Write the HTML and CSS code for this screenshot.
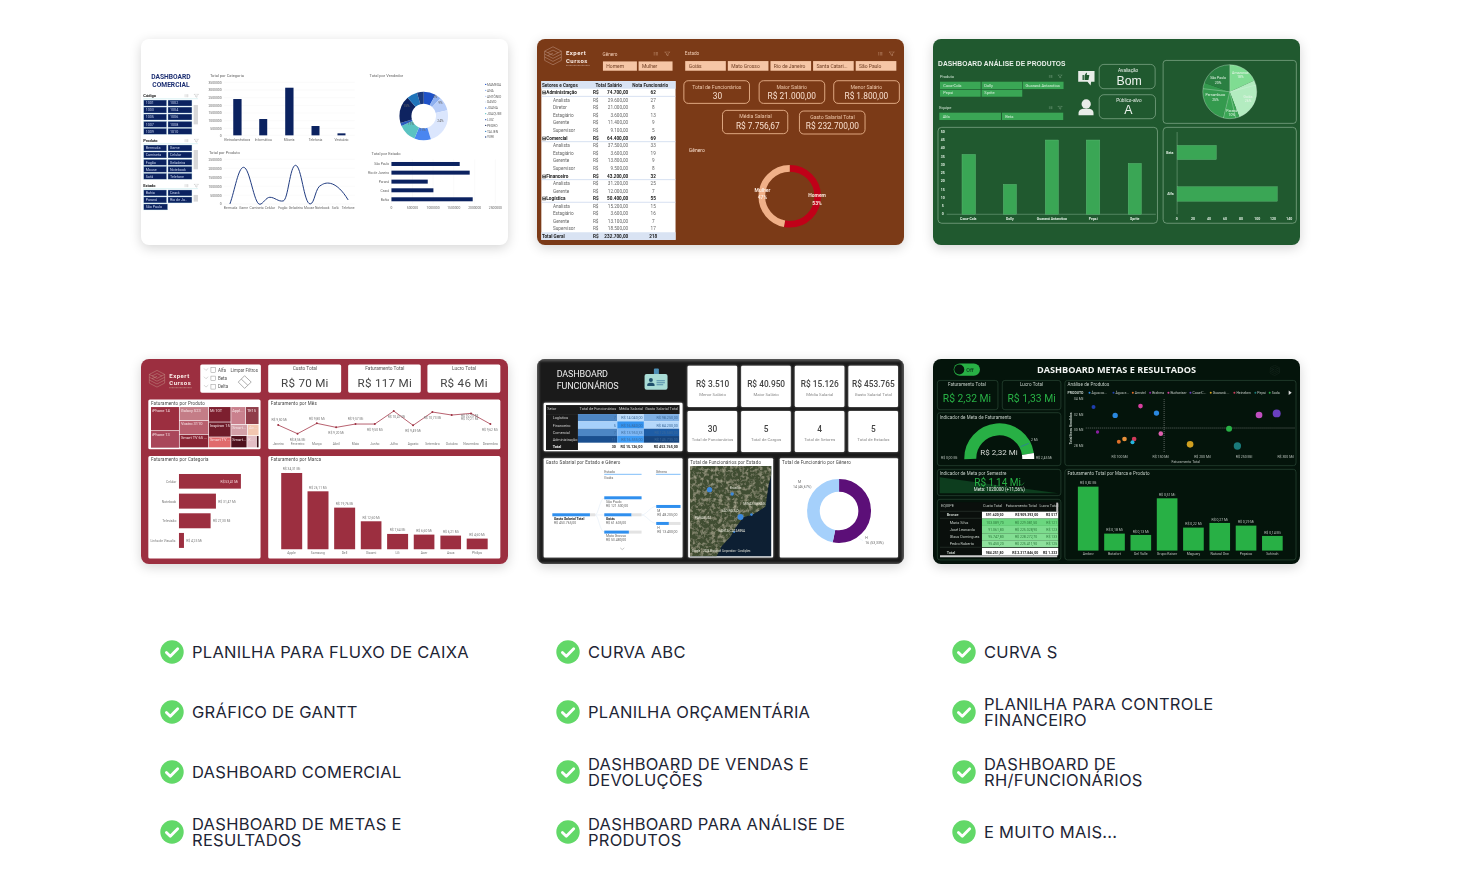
FILE: index.html
```html
<!DOCTYPE html>
<html lang="pt-BR">
<head>
<meta charset="utf-8">
<title>Dashboards</title>
<link rel="stylesheet" href="styles.css">
</head>
<body>
<svg class="defs" width="0" height="0" aria-hidden="true">
  <symbol id="check" viewBox="0 0 24 24">
    <circle cx="12" cy="12" r="11.7" fill="#62d868"/>
    <path d="M6.4 12.4l3.9 3.9 7.4-7.6" fill="none" stroke="#fff" stroke-width="2.8" stroke-linecap="round" stroke-linejoin="round"/>
  </symbol>
  <symbol id="slicer-icons" viewBox="0 0 48 12">
    <path d="M2 3h3M2 6h3M2 9h3M7 3h6M7 6h6M7 9h6M30 1h14l-5 5v5l-4-2V6z" fill="none" stroke="currentColor" stroke-width="1"/>
  </symbol>
  <symbol id="hexlogo" viewBox="0 0 56 58">
    <path d="M28 2L53 15V43L28 56 3 43V15zM3 15L28 28 53 15M3 24L28 37 53 24M3 33L28 46 53 33M12 20L28 12 44 20M12 29L28 21" fill="none" stroke="currentColor" stroke-width="1.4"/>
  </symbol>
</svg>

<main class="page">
  <section class="gallery">

    <!-- Dashboard comercial -->
    <figure class="card card-white">
      <svg class="dash d1" viewBox="33 27 1102 618" role="img" aria-label="Dashboard comercial">
        <text x="123" y="146" class="c1title mid">DASHBOARD</text>
        <text x="123" y="172" class="c1title mid">COMERCIAL</text>

        <g class="slic">
          <text x="40" y="201" class="hd">Código</text><path d="M40 206H204" class="ul"/>
          <use href="#slicer-icons" x="162" y="191" width="48" height="12" class="ic"/>
          <rect x="41" y="210" width="69" height="18"/><rect x="114" y="210" width="72" height="18"/>
          <rect x="41" y="231" width="69" height="18"/><rect x="114" y="231" width="72" height="18"/>
          <rect x="41" y="252" width="69" height="18"/><rect x="114" y="252" width="72" height="18"/>
          <rect x="41" y="274" width="69" height="18"/><rect x="114" y="274" width="72" height="18"/>
          <rect x="41" y="295" width="69" height="18"/><rect x="114" y="295" width="72" height="18"/>
          <rect x="191" y="225" width="13" height="58" class="sb"/>
          <text x="47" y="223">1001</text><text x="120" y="223">1002</text>
          <text x="47" y="244">1003</text><text x="120" y="244">1004</text>
          <text x="47" y="265">1005</text><text x="120" y="265">1006</text>
          <text x="47" y="287">1007</text><text x="120" y="287">1008</text>
          <text x="47" y="308">1009</text><text x="120" y="308">1010</text>

          <text x="40" y="335" class="hd">Produto</text><path d="M40 341H204" class="ul"/>
          <use href="#slicer-icons" x="162" y="326" width="48" height="12" class="ic"/>
          <rect x="41" y="345" width="69" height="18"/><rect x="114" y="345" width="72" height="18"/>
          <rect x="41" y="366" width="69" height="18"/><rect x="114" y="366" width="72" height="18"/>
          <rect x="41" y="388" width="69" height="18"/><rect x="114" y="388" width="72" height="18"/>
          <rect x="41" y="409" width="69" height="18"/><rect x="114" y="409" width="72" height="18"/>
          <rect x="41" y="430" width="69" height="18"/><rect x="114" y="430" width="72" height="18"/>
          <rect x="191" y="360" width="13" height="58" class="sb"/>
          <text x="47" y="358">Bermuda</text><text x="120" y="358">Game</text>
          <text x="47" y="379">Camiseta</text><text x="120" y="379">Celular</text>
          <text x="47" y="401">Fogão</text><text x="120" y="401">Geladeira</text>
          <text x="47" y="422">Mouse</text><text x="120" y="422">Notebook</text>
          <text x="47" y="443">Sofá</text><text x="120" y="443">Telefone</text>

          <text x="40" y="470" class="hd">Estado</text><path d="M40 476H204" class="ul"/>
          <use href="#slicer-icons" x="162" y="461" width="48" height="12" class="ic"/>
          <rect x="41" y="480" width="69" height="18"/><rect x="114" y="480" width="72" height="18"/>
          <rect x="41" y="501" width="69" height="18"/><rect x="114" y="501" width="72" height="18"/>
          <rect x="41" y="522" width="72" height="18"/>
          <rect x="191" y="495" width="13" height="20" class="sb"/>
          <text x="47" y="493">Bahia</text><text x="120" y="493">Ceará</text>
          <text x="47" y="514">Paraná</text><text x="120" y="514">Rio de Ja..</text>
          <text x="47" y="535">São Paulo</text>
        </g>

        <text x="240" y="141" class="ttl">Total por Categoria</text>
        <path d="M282 157H675M282 180H675M282 203H675M282 226H675M282 249H675M282 272H675M282 295H675M282 316H675" class="grid"/>
        <g class="ax end">
          <text x="275" y="161">3500000</text><text x="275" y="184">3000000</text><text x="275" y="207">2500000</text><text x="275" y="230">2000000</text>
          <text x="275" y="253">1500000</text><text x="275" y="276">1000000</text><text x="275" y="299">500000</text><text x="275" y="320">0</text>
        </g>
        <g class="navy">
          <rect x="310" y="207" width="25" height="109"/><rect x="388" y="267" width="24" height="49"/>
          <rect x="466" y="173" width="25" height="143"/><rect x="545" y="288" width="24" height="28"/>
          <rect x="623" y="310" width="24" height="6"/>
        </g>
        <g class="ax mid">
          <text x="322" y="332">Eletrodomésticos</text><text x="400" y="332">Informática</text><text x="478" y="332">Móveis</text>
          <text x="557" y="332">Telefonia</text><text x="635" y="332">Vestuário</text>
        </g>

        <text x="719" y="141" class="ttl">Total por Vendedor</text>
        <g class="donut" transform="rotate(-90 882 258)">
          <circle cx="882" cy="258" r="55" pathLength="100" stroke="#1f52c8" stroke-dasharray="8 100"/>
          <circle cx="882" cy="258" r="55" pathLength="100" stroke="#8fb0ef" stroke-dasharray="4 100" stroke-dashoffset="-8"/>
          <circle cx="882" cy="258" r="55" pathLength="100" stroke="#b8cdf8" stroke-dasharray="9 100" stroke-dashoffset="-12"/>
          <circle cx="882" cy="258" r="55" pathLength="100" stroke="#dbe6fd" stroke-dasharray="24 100" stroke-dashoffset="-21"/>
          <circle cx="882" cy="258" r="55" pathLength="100" stroke="#4a86f0" stroke-dasharray="11 100" stroke-dashoffset="-45"/>
          <circle cx="882" cy="258" r="55" pathLength="100" stroke="#5bc3c2" stroke-dasharray="12 100" stroke-dashoffset="-56"/>
          <circle cx="882" cy="258" r="55" pathLength="100" stroke="#2b5bbd" stroke-dasharray="2 100" stroke-dashoffset="-68"/>
          <circle cx="882" cy="258" r="55" pathLength="100" stroke="#0e2360" stroke-dasharray="18 100" stroke-dashoffset="-70"/>
          <circle cx="882" cy="258" r="55" pathLength="100" stroke="#1f74ba" stroke-dasharray="7 100" stroke-dashoffset="-88"/>
          <circle cx="882" cy="258" r="55" pathLength="100" stroke="#1a3a80" stroke-dasharray="5 100" stroke-dashoffset="-95"/>
        </g>
        <g class="ax mid">
          <text x="916" y="203">3%</text><text x="932" y="221">9%</text><text x="932" y="276">24%</text><text x="878" y="302">11%</text>
          <text x="843" y="286">11%</text><text x="830" y="230">15%</text>
        </g>
        <g class="legend">
          <text x="1072" y="167">MAMEDA</text><text x="1072" y="185">ANA</text><text x="1072" y="203">ANTÔNIO</text><text x="1072" y="220">DAVID</text><text x="1072" y="238">JOANA</text>
          <text x="1072" y="255">JOAQUIM</text><text x="1072" y="273">LUIZ</text><text x="1072" y="290">PEDRO</text><text x="1072" y="308">TALIEN</text><text x="1072" y="325">YURI</text>
          <circle cx="1068" cy="163" r="2" fill="#1f52c8"/><circle cx="1068" cy="181" r="2" fill="#8fb0ef"/><circle cx="1068" cy="199" r="2" fill="#b8cdf8"/><circle cx="1068" cy="216" r="2" fill="#dbe6fd"/><circle cx="1068" cy="234" r="2" fill="#4a86f0"/>
          <circle cx="1068" cy="251" r="2" fill="#5bc3c2"/><circle cx="1068" cy="269" r="2" fill="#2b5bbd"/><circle cx="1068" cy="286" r="2" fill="#0e2360"/><circle cx="1068" cy="304" r="2" fill="#1f74ba"/><circle cx="1068" cy="321" r="2" fill="#1a3a80"/>
        </g>

        <text x="237" y="372" class="ttl">Total por Produto</text>
        <path d="M282 388H675M282 415H675M282 442H675M282 469H675M282 496H675M282 522H675" class="grid"/>
        <g class="ax end">
          <text x="275" y="392">2500000</text><text x="275" y="419">2000000</text><text x="275" y="446">1500000</text><text x="275" y="473">1000000</text><text x="275" y="500">500000</text><text x="275" y="526">0</text>
        </g>
        <path d="M300 522C315 480 325 412 341 412C360 412 372 524 390 523C400 522 408 502 420 502C435 502 445 516 460 513C475 510 480 406 497 406C515 406 522 522 541 522C555 522 556 470 575 465C590 455 620 452 655 510" class="curve"/>
        <g class="ax mid">
          <text x="302" y="537">Bermuda</text><text x="341" y="537">Game</text><text x="380" y="537">Camiseta</text><text x="420" y="537">Celular</text><text x="459" y="537">Fogão</text>
          <text x="498" y="537">Geladeira</text><text x="538" y="537">Mouse</text><text x="577" y="537">Notebook</text><text x="616" y="537">Sofá</text><text x="655" y="537">Telefone</text>
        </g>

        <text x="725" y="376" class="ttl">Total por Estado</text>
        <path d="M785 388V522M848 388V522M910 388V522M972 388V522M1035 388V522M1097 388V522" class="grid"/>
        <g class="navy">
          <rect x="785" y="396" width="205" height="12"/><rect x="785" y="422" width="235" height="12"/><rect x="785" y="449" width="109" height="12"/>
          <rect x="785" y="475" width="126" height="12"/><rect x="785" y="502" width="244" height="12"/>
        </g>
        <g class="ax end">
          <text x="778" y="406">São Paulo</text><text x="778" y="432">Rio de Janeiro</text><text x="778" y="459">Paraná</text><text x="778" y="485">Ceará</text><text x="778" y="512">Bahia</text>
        </g>
        <g class="ax mid">
          <text x="785" y="537">0</text><text x="848" y="537">500000</text><text x="910" y="537">1000000</text><text x="972" y="537">1500000</text><text x="1035" y="537">2000000</text><text x="1097" y="537">2500000</text>
        </g>
      </svg>
    </figure>

    <!-- Análise de funcionários, marrom -->
    <figure class="card card-brown">
      <svg class="dash d2" viewBox="21 27 1102 618" role="img" aria-label="Dashboard de funcionários">
        <use href="#hexlogo" x="41" y="48" width="56" height="58" class="logo"/>
        <text x="108" y="76" class="brand">Expert</text>
        <text x="108" y="98" class="brand">Cursos</text>
        <path d="M108 106H180" class="brandline"/>

        <text x="218" y="77" class="lbl">Gênero</text>
        <use href="#slicer-icons" x="368" y="64" width="58" height="14" class="ic"/>
        <text x="465" y="76" class="lbl">Estado</text>
        <use href="#slicer-icons" x="1042" y="64" width="58" height="14" class="ic"/>
        <g class="peach">
          <rect x="219" y="94" width="102" height="28"/><rect x="326" y="94" width="102" height="28"/>
          <rect x="466" y="93" width="122" height="29"/><rect x="594" y="93" width="122" height="29"/><rect x="722" y="93" width="122" height="29"/><rect x="850" y="93" width="122" height="29"/><rect x="978" y="93" width="122" height="29"/>
          <text x="229" y="113">Homem</text><text x="336" y="113">Mulher</text>
          <text x="477" y="113">Goiás</text><text x="604" y="113">Mato Grosso</text><text x="732" y="113">Rio de Janeiro</text><text x="860" y="113">Santa Catari...</text><text x="988" y="113">São Paulo</text>
        </g>

        <g class="tbl">
          <rect x="34" y="153" width="403" height="477" class="tbg"/>
          <rect x="34" y="153" width="403" height="23" class="thd"/>
          <rect x="34" y="607" width="403" height="23" class="thd"/>
          <path d="M34 199H437M34 335H437M34 449H437M34 517H437" class="tln"/>
          <g class="b">
            <text x="36" y="170">Setores e Cargos</text><text x="197" y="170">Total Salário</text><text x="307" y="170">Nota Funcionário</text>
            <text x="37" y="193">⊟Administração</text><text x="189" y="193">R$</text><text x="295" y="193" class="end">74.700,00</text><text x="370" y="193" class="mid">62</text>
            <text x="37" y="329">⊟Comercial</text><text x="189" y="329">R$</text><text x="295" y="329" class="end">64.400,00</text><text x="370" y="329" class="mid">69</text>
            <text x="37" y="443">⊟Financeiro</text><text x="189" y="443">R$</text><text x="295" y="443" class="end">43.200,00</text><text x="370" y="443" class="mid">32</text>
            <text x="37" y="511">⊟Logística</text><text x="189" y="511">R$</text><text x="295" y="511" class="end">50.400,00</text><text x="370" y="511" class="mid">55</text>
            <text x="36" y="624">Total Geral</text><text x="189" y="624">R$</text><text x="295" y="624" class="end">232.700,00</text><text x="370" y="624" class="mid">218</text>
          </g>
          <text x="69" y="215">Analista</text><text x="189" y="215">R$</text><text x="295" y="215" class="end">29.600,00</text><text x="370" y="215" class="mid">27</text>
          <text x="69" y="238">Diretor</text><text x="189" y="238">R$</text><text x="295" y="238" class="end">21.000,00</text><text x="370" y="238" class="mid">8</text>
          <text x="69" y="261">Estagiário</text><text x="189" y="261">R$</text><text x="295" y="261" class="end">3.600,00</text><text x="370" y="261" class="mid">13</text>
          <text x="69" y="283">Gerente</text><text x="189" y="283">R$</text><text x="295" y="283" class="end">11.400,00</text><text x="370" y="283" class="mid">9</text>
          <text x="69" y="306">Supervisor</text><text x="189" y="306">R$</text><text x="295" y="306" class="end">9.100,00</text><text x="370" y="306" class="mid">5</text>
          <text x="69" y="351">Analista</text><text x="189" y="351">R$</text><text x="295" y="351" class="end">37.500,00</text><text x="370" y="351" class="mid">33</text>
          <text x="69" y="374">Estagiário</text><text x="189" y="374">R$</text><text x="295" y="374" class="end">3.600,00</text><text x="370" y="374" class="mid">19</text>
          <text x="69" y="397">Gerente</text><text x="189" y="397">R$</text><text x="295" y="397" class="end">13.800,00</text><text x="370" y="397" class="mid">9</text>
          <text x="69" y="419">Supervisor</text><text x="189" y="419">R$</text><text x="295" y="419" class="end">9.500,00</text><text x="370" y="419" class="mid">8</text>
          <text x="69" y="465">Analista</text><text x="189" y="465">R$</text><text x="295" y="465" class="end">31.200,00</text><text x="370" y="465" class="mid">25</text>
          <text x="69" y="488">Gerente</text><text x="189" y="488">R$</text><text x="295" y="488" class="end">12.000,00</text><text x="370" y="488" class="mid">7</text>
          <text x="69" y="533">Analista</text><text x="189" y="533">R$</text><text x="295" y="533" class="end">15.200,00</text><text x="370" y="533" class="mid">15</text>
          <text x="69" y="556">Estagiário</text><text x="189" y="556">R$</text><text x="295" y="556" class="end">3.600,00</text><text x="370" y="556" class="mid">16</text>
          <text x="69" y="578">Gerente</text><text x="189" y="578">R$</text><text x="295" y="578" class="end">13.100,00</text><text x="370" y="578" class="mid">7</text>
          <text x="69" y="601">Supervisor</text><text x="189" y="601">R$</text><text x="295" y="601" class="end">18.500,00</text><text x="370" y="601" class="mid">17</text>
        </g>

        <g class="kpi">
          <rect x="462" y="152" width="197" height="68" rx="13"/><rect x="688" y="152" width="197" height="68" rx="13"/><rect x="912" y="152" width="197" height="68" rx="13"/>
          <rect x="578" y="241" width="196" height="70" rx="13"/><rect x="809" y="243" width="197" height="69" rx="13"/>
          <g class="mid">
            <text x="561" y="176">Total de Funcionários</text><text x="786" y="176">Maior Salário</text><text x="1010" y="176">Menor Salário</text>
            <text x="677" y="265">Média Salarial</text><text x="908" y="267">Gasto Salarial Total</text>
            <text x="563" y="207" class="v">30</text><text x="786" y="207" class="v">R$ 21.000,00</text><text x="1010" y="207" class="v">R$ 1.800,00</text>
            <text x="684" y="297" class="v">R$ 7.756,67</text><text x="908" y="298" class="v">R$ 232.700,00</text>
          </g>
        </g>

        <text x="477" y="365" class="lbl2">Gênero</text>
        <g class="donut thin" transform="rotate(-90 780 499)">
          <circle cx="780" cy="499" r="84" pathLength="100" stroke="#c00018" stroke-dasharray="53 100"/>
          <circle cx="780" cy="499" r="84" pathLength="100" stroke="#f0b088" stroke-dasharray="47 100" stroke-dashoffset="-53"/>
        </g>
        <g class="plab mid">
          <text x="698" y="485">Mulher</text><text x="698" y="508">47%</text>
          <text x="862" y="502">Homem</text><text x="862" y="525">53%</text>
        </g>
      </svg>
    </figure>

    <!-- Análise de produtos, verde -->
    <figure class="card card-green">
      <svg class="dash d3" viewBox="24 27 1102 618" role="img" aria-label="Dashboard análise de produtos">
        <text x="39" y="107" class="gt">DASHBOARD ANÁLISE DE PRODUTOS</text>
        <text x="45" y="144" class="gl">Produto</text>
        <use href="#slicer-icons" x="370" y="133" width="46" height="12" class="ic"/>
        <g class="gb">
          <rect x="45" y="155" width="122" height="22"/><rect x="170" y="155" width="122" height="22"/><rect x="294" y="155" width="122" height="22"/>
          <rect x="45" y="179" width="122" height="21"/><rect x="170" y="179" width="122" height="21"/>
          <text x="55" y="170">Coca-Cola</text><text x="178" y="170">Dolly</text><text x="302" y="170">Guaraná Antarctica</text>
          <text x="55" y="193">Pepsi</text><text x="178" y="193">Sprite</text>
        </g>
        <text x="43" y="237" class="gl">Equipe</text>
        <use href="#slicer-icons" x="370" y="227" width="46" height="12" class="ic"/>
        <g class="gb">
          <rect x="43" y="248" width="185" height="22"/><rect x="231" y="248" width="184" height="22"/>
          <text x="53" y="263">Alfa</text><text x="241" y="263">Beta</text>
        </g>

        <path d="M460 123H509V155H499L497 166 488 155H460z" class="wh"/>
        <path d="M473 135h4v15h-4zM479 136l5-8c2 0 3 2 2 5l-1 2h7c1 0 2 1 1 3l-2 10c0 2-1 2-3 2h-9z" class="thumb"/>
        <circle cx="484" cy="222" r="14" class="wh"/>
        <path d="M461 256V248C461 241 468 237 474 236H494C500 237 506 241 506 248V256z" class="wh"/>

        <g class="gbox">
          <rect x="523" y="103" width="168" height="73" rx="14"/><rect x="523" y="194" width="169" height="72" rx="14"/>
          <rect x="715" y="91" width="400" height="189" rx="9"/><rect x="39" y="292" width="659" height="288" rx="11"/><rect x="715" y="292" width="400" height="288" rx="11"/>
        </g>
        <g class="gv mid">
          <text x="610" y="125" class="s13">Avaliação</text><text x="613" y="165" class="s36">Bom</text>
          <text x="612" y="215" class="s13">Público-alvo</text><text x="611" y="253" class="s36">A</text>
        </g>

        <g class="donut pie" transform="rotate(-90 915 185)">
          <circle cx="915" cy="185" r="40.5" pathLength="100" stroke="#7fdc92" stroke-dasharray="18 100"/>
          <circle cx="915" cy="185" r="40.5" pathLength="100" stroke="#b3ecc0" stroke-dasharray="26 100" stroke-dashoffset="-18"/>
          <circle cx="915" cy="185" r="40.5" pathLength="100" stroke="#3ba655" stroke-dasharray="10 100" stroke-dashoffset="-44"/>
          <circle cx="915" cy="185" r="40.5" pathLength="100" stroke="#349a4e" stroke-dasharray="26 100" stroke-dashoffset="-54"/>
          <circle cx="915" cy="185" r="40.5" pathLength="100" stroke="#2a7f42" stroke-dasharray="20 100" stroke-dashoffset="-80"/>
        </g>
        <path d="M915 185V104M915 185L995 165M915 185L933 264M915 185L896 264M915 185L835 176" class="pieln"/>
        <circle cx="915" cy="185" r="81" class="piering"/>
        <g class="pl mid">
          <text x="947" y="131">Amazonas</text><text x="947" y="144">18%</text>
          <text x="970" y="204">Goiás</text><text x="970" y="216">26%</text>
          <text x="921" y="246">Paraná</text><text x="921" y="258">10%</text>
          <text x="872" y="199">Pernambuco</text><text x="872" y="212">25%</text>
          <text x="880" y="148">São Paulo</text><text x="880" y="161">20%</text>
        </g>

        <path d="M65 553H693M757 306V553" class="gax"/>
        <g class="gc">
          <rect x="111" y="373" width="41" height="180"/><rect x="235" y="463" width="40" height="90"/><rect x="361" y="330" width="40" height="223"/>
          <rect x="484" y="330" width="41" height="223"/><rect x="610" y="400" width="40" height="153"/>
          <rect x="757" y="346" width="118" height="43"/><rect x="757" y="470" width="301" height="44"/>
        </g>
        <g class="ga mid">
          <text x="53" y="308">50</text><text x="53" y="333">45</text><text x="53" y="358">40</text><text x="53" y="383">35</text><text x="53" y="408">30</text><text x="53" y="432">25</text>
          <text x="53" y="457">20</text><text x="53" y="482">15</text><text x="53" y="507">10</text><text x="53" y="532">5</text><text x="53" y="556">0</text>
          <text x="130" y="570">Coca-Cola</text><text x="255" y="570">Dolly</text><text x="381" y="570">Guaraná Antarctica</text><text x="505" y="570">Pepsi</text><text x="630" y="570">Sprite</text>
          <text x="735" y="372">Beta</text><text x="737" y="495">Alfa</text>
          <text x="756" y="570">0</text><text x="805" y="570">20</text><text x="853" y="570">40</text><text x="901" y="570">60</text><text x="949" y="570">80</text><text x="998" y="570">100</text><text x="1045" y="570">120</text><text x="1094" y="570">140</text>
        </g>
      </svg>
    </figure>

    <!-- Vendas, vermelho -->
    <figure class="card card-red">
      <svg class="dash d4" viewBox="33 27 1102 618" role="img" aria-label="Dashboard de vendas">
        <use href="#hexlogo" x="55" y="58" width="52" height="56" class="logo"/>
        <text x="118" y="84" class="brand">Expert</text>
        <text x="118" y="105" class="brand">Cursos</text>
        <path d="M118 113H186" class="brandline"/>

        <g class="rp">
          <rect x="211" y="43" width="182" height="85" rx="5"/>
          <rect x="415" y="43" width="219" height="85" rx="5"/><rect x="655" y="43" width="218" height="85" rx="5"/><rect x="893" y="43" width="219" height="85" rx="5"/>
          <rect x="55" y="148" width="337" height="150" rx="5"/><rect x="415" y="148" width="697" height="150" rx="5"/>
          <rect x="55" y="318" width="337" height="308" rx="5"/><rect x="415" y="318" width="697" height="308" rx="5"/>
        </g>
        <path d="M222 55l6 6 7-6M222 80l6 6 7-6M222 105l6 6 7-6" class="chev"/>
        <g class="cb"><rect x="243" y="53" width="14" height="14"/><rect x="243" y="78" width="14" height="14"/><rect x="243" y="103" width="14" height="14"/></g>
        <g class="rt">
          <text x="264" y="65">Alfa</text><text x="264" y="90">Beta</text><text x="264" y="115">Delta</text>
          <text x="343" y="65" class="mid">Limpar Filtros</text>
        </g>
        <path d="M344 77L364 96 344 115 325 96zM334 87L354 106" class="erase"/>
        <g class="mid">
          <text x="525" y="59" class="rl">Custo Total</text><text x="765" y="59" class="rl">Faturamento Total</text><text x="1003" y="59" class="rl">Lucro Total</text>
          <text x="525" y="110" class="rv">R$ 70 Mi</text><text x="765" y="110" class="rv">R$ 117 Mi</text><text x="1003" y="110" class="rv">R$ 46 Mi</text>
        </g>

        <text x="63" y="164" class="rh">Faturamento por Produto</text>
        <rect x="63" y="171" width="84" height="70" fill="#9c2f40"/><rect x="63" y="243" width="84" height="50" fill="#a9475a"/>
        <rect x="149" y="171" width="86" height="39" fill="#c47d87"/><rect x="149" y="212" width="86" height="40" fill="#b85f6e"/><rect x="149" y="254" width="86" height="38" fill="#8a2535"/>
        <rect x="237" y="171" width="65" height="44" fill="#7d1f2f"/><rect x="237" y="217" width="65" height="43" fill="#6f1c2a"/><rect x="237" y="262" width="65" height="30" fill="#e06a6c"/>
        <rect x="304" y="171" width="42" height="51" fill="#c9808d"/><rect x="348" y="171" width="38" height="51" fill="#8f3c49"/>
        <rect x="304" y="224" width="48" height="32" fill="#d3a0a8"/><rect x="354" y="224" width="32" height="32" fill="#f2c6b0"/>
        <rect x="304" y="258" width="46" height="34" fill="#4f111d"/><rect x="352" y="258" width="28" height="34" fill="#e2bdc5"/><rect x="381" y="258" width="5" height="34" fill="#3b0f18"/>
        <g class="tm">
          <text x="66" y="186">iPhone 14</text><text x="66" y="258">iPhone 13</text><text x="153" y="186">Galaxy S23</text><text x="153" y="226">Vostro 3110</text><text x="153" y="268">Smart TV 65 ...</text>
          <text x="240" y="186">Mi 10T</text><text x="240" y="232">Inspiron 15</text><text x="240" y="273">Smart TV ...</text><text x="307" y="186">Appl...</text><text x="351" y="186">TE15</text>
          <text x="307" y="238">Smart...</text><text x="357" y="238">Air...</text><text x="307" y="273">Smart...</text><text x="355" y="273">K...</text>
        </g>

        <text x="423" y="164" class="rh">Faturamento por Mês</text>
        <polyline points="445,225 503,251 561,220 619,232 677,222 735,222 792,183 850,226 908,186 966,195 1024,190 1082,222" class="rline"/>
        <g class="rdot">
          <circle cx="445" cy="225" r="3"/><circle cx="503" cy="251" r="3"/><circle cx="561" cy="220" r="3"/><circle cx="619" cy="232" r="3"/><circle cx="677" cy="222" r="3"/><circle cx="735" cy="222" r="3"/>
          <circle cx="792" cy="183" r="3"/><circle cx="850" cy="226" r="3"/><circle cx="908" cy="186" r="3"/><circle cx="966" cy="195" r="3"/><circle cx="1024" cy="190" r="3"/><circle cx="1082" cy="222" r="3"/>
        </g>
        <g class="rs mid">
          <text x="448" y="214">R$ 9,50 Mi</text><text x="503" y="272">R$ 8,56 Mi</text><text x="561" y="209">R$ 9,80 Mi</text><text x="619" y="253">R$ 9,20 Mi</text><text x="677" y="211">R$ 9,57 Mi</text><text x="735" y="243">R$ 9,50 Mi</text>
          <text x="800" y="203">R$ 10,47 Mi</text><text x="850" y="247">R$ 9,49 Mi</text><text x="908" y="207">R$ 10,73 Mi</text><text x="1020" y="200">R$ 10,25 Mi</text><text x="1020" y="211">R$ 10,21 Mi</text><text x="1080" y="243">R$ 9,62 Mi</text>
          <text x="445" y="285">Janeiro</text><text x="503" y="285">Fevereiro</text><text x="561" y="285">Março</text><text x="619" y="285">Abril</text><text x="677" y="285">Maio</text><text x="735" y="285">Junho</text>
          <text x="792" y="285">Julho</text><text x="850" y="285">Agosto</text><text x="908" y="285">Setembro</text><text x="966" y="285">Outubro</text><text x="1024" y="285">Novembro</text><text x="1082" y="285">Dezembro</text>
        </g>

        <text x="63" y="334" class="rh">Faturamento por Categoria</text>
        <g class="rbar">
          <rect x="147" y="372" width="186" height="44"/><rect x="147" y="431" width="111" height="45"/><rect x="147" y="490" width="95" height="45"/><rect x="147" y="549" width="15" height="45"/>
          <rect x="454" y="369" width="63" height="229"/><rect x="533" y="424" width="63" height="174"/><rect x="613" y="473" width="63" height="125"/><rect x="693" y="514" width="62" height="84"/>
          <rect x="772" y="552" width="63" height="46"/><rect x="852" y="554" width="62" height="44"/><rect x="932" y="557" width="62" height="41"/><rect x="1011" y="566" width="63" height="32"/>
        </g>
        <g class="rs end">
          <text x="139" y="399">Celular</text><text x="139" y="458">Notebook</text><text x="139" y="517">Televisão</text><text x="139" y="576">Linha de Visualiz.</text>
        </g>
        <g class="rs">
          <text x="272" y="399" class="wtxt">R$ 53,41 Mi</text><text x="265" y="458">R$ 31,47 Mi</text><text x="249" y="517">R$ 27,30 Mi</text><text x="169" y="576">R$ 4,25 Mi</text>
        </g>
        <text x="423" y="334" class="rh">Faturamento por Marca</text>
        <g class="rs mid">
          <text x="485" y="361">R$ 34,31 Mi</text><text x="564" y="416">R$ 26,11 Mi</text><text x="644" y="465">R$ 19,76 Mi</text><text x="724" y="506">R$ 12,60 Mi</text>
          <text x="803" y="544">R$ 7,64 Mi</text><text x="883" y="546">R$ 6,60 Mi</text><text x="963" y="549">R$ 6,21 Mi</text><text x="1042" y="558">R$ 4,60 Mi</text>
          <text x="485" y="612">Apple</text><text x="564" y="612">Samsung</text><text x="644" y="612">Dell</text><text x="724" y="612">Xiaomi</text>
          <text x="803" y="612">LG</text><text x="883" y="612">Acer</text><text x="963" y="612">Asus</text><text x="1042" y="612">Philips</text>
        </g>
      </svg>
    </figure>

    <!-- Funcionários, preto -->
    <figure class="card card-black">
      <svg class="dash d5" viewBox="21 27 1102 618" role="img" aria-label="Dashboard funcionários">
        <defs>
          <filter id="sat" x="0" y="0" width="100%" height="100%">
            <feTurbulence type="fractalNoise" baseFrequency="0.09" numOctaves="3" seed="4"/>
            <feColorMatrix values="0 0 0 0 0.52  0 0 0 0 0.5  0 0 0 0 0.36  0 0 0 1.5 -0.68"/>
            <feComposite in2="SourceGraphic" operator="in"/>
            <feMerge><feMergeNode in="SourceGraphic"/><feMergeNode/></feMerge>
          </filter>
          <clipPath id="mapclip"><rect x="480" y="348" width="245" height="272"/></clipPath>
        </defs>
        <path d="M21 27H1123V645H21z" class="glow"/>
        <text x="80" y="81" class="bt">DASHBOARD</text>
        <text x="80" y="116" class="bt">FUNCIONÁRIOS</text>
        <rect x="372" y="55" width="15" height="26" rx="3" fill="#4d8fb5"/>
        <rect x="344" y="72" width="69" height="47" rx="6" fill="#a9dcd6"/>
        <circle cx="363" cy="90" r="6" fill="#1f4f6b"/><path d="M352 108V104C352 100 357 98 363 98S374 100 374 104V108z" fill="#1f4f6b"/>
        <path d="M380 92H405M380 98H405M380 104H400" class="idln"/>

        <g class="bp">
          <rect x="473" y="47" width="149" height="124" rx="4"/><rect x="634" y="47" width="149" height="124" rx="4"/><rect x="795" y="47" width="149" height="124" rx="4"/><rect x="956" y="47" width="149" height="124" rx="4"/>
          <rect x="473" y="183" width="149" height="123" rx="4"/><rect x="634" y="183" width="149" height="123" rx="4"/><rect x="795" y="183" width="149" height="123" rx="4"/><rect x="956" y="183" width="149" height="123" rx="4"/>
          <rect x="41" y="158" width="417" height="146" rx="4"/>
          <rect x="41" y="325" width="417" height="298" rx="3"/><rect x="475" y="325" width="255" height="298" rx="3"/><rect x="750" y="325" width="355" height="298" rx="3"/>
        </g>
        <g class="mid">
          <text x="548" y="111" class="bv">R$ 3.510</text><text x="709" y="111" class="bv">R$ 40.950</text><text x="870" y="111" class="bv">R$ 15.126</text><text x="1031" y="111" class="bv">R$ 453.765</text>
          <text x="548" y="137" class="bl">Menor Salário</text><text x="709" y="137" class="bl">Maior Salário</text><text x="870" y="137" class="bl">Média Salarial</text><text x="1031" y="137" class="bl">Gasto Salarial Total</text>
          <text x="548" y="246" class="bv">30</text><text x="709" y="246" class="bv">5</text><text x="870" y="246" class="bv">4</text><text x="1031" y="246" class="bv">5</text>
          <text x="548" y="272" class="bl">Total de Funcionários</text><text x="709" y="272" class="bl">Total de Cargos</text><text x="870" y="272" class="bl">Total de Setores</text><text x="1031" y="272" class="bl">Total de Estados</text>
        </g>

        <rect x="48" y="165" width="401" height="27" class="bk"/><rect x="48" y="192" width="96" height="108" class="bk"/>
        <rect x="144" y="192" width="118" height="22" fill="#4d86c4"/><rect x="262" y="192" width="80" height="22" fill="#bcdcfb"/><rect x="342" y="192" width="106" height="22" fill="#7fb0e4"/>
        <rect x="144" y="214" width="118" height="22" fill="#a5d0fb"/><rect x="262" y="214" width="80" height="22" fill="#3393f0"/><rect x="342" y="214" width="106" height="22" fill="#b5d8fb"/>
        <rect x="144" y="236" width="118" height="22" fill="#4d86c4"/><rect x="262" y="236" width="80" height="22" fill="#7fb8f5"/><rect x="342" y="236" width="106" height="22" fill="#1e5da6"/>
        <rect x="144" y="258" width="118" height="20" fill="#1a4f8f"/><rect x="262" y="258" width="80" height="20" fill="#3f9cf5"/><rect x="342" y="258" width="106" height="20" fill="#16457f"/>
        <g class="btw">
          <text x="52" y="180">Setor</text><text x="149" y="180">Total de Funcionários</text><text x="267" y="180">Média Salarial</text><text x="346" y="180">Gasto Salarial Total</text>
          <text x="68" y="208">Logística</text><text x="68" y="230">Financeiro</text><text x="68" y="252">Comercial</text><text x="68" y="272">Administração</text><text x="68" y="293" class="b">Total</text>
        </g>
        <g class="btd end">
          <text x="258" y="208">7</text><text x="258" y="230">5</text><text x="258" y="252">7</text><text x="258" y="272">11</text>
          <text x="338" y="208">R$ 14.040,00</text><text x="338" y="230">R$ 16.840,00</text><text x="338" y="252">R$ 13.953,33</text><text x="338" y="272">R$ 16.555,00</text>
          <text x="444" y="208">R$ 98.250,00</text><text x="444" y="230">R$ 84.200,00</text><text x="444" y="252">R$ 125.580,00</text><text x="444" y="272">R$ 145.735,00</text>
          <g class="b"><text x="258" y="293">30</text><text x="338" y="293">R$ 15.126,00</text><text x="444" y="293">R$ 453.765,00</text></g>
        </g>

        <g class="bh">
          <text x="47" y="341">Gasto Salarial por Estado e Gênero</text>
          <text x="481" y="341">Total de Funcionários por Estado</text>
          <text x="757" y="341">Total de Funcionário por Gênero</text>
        </g>
        <path d="M196 495C205 495 210 445 223 444M196 495H223M196 495C205 495 210 546 223 546M335 495C350 495 360 470 379 469M335 495C350 495 360 520 379 520" class="conn"/>
        <path d="M223 373H335M378 373H452" class="bun"/>
        <g class="tree">
          <rect x="67" y="490" width="113" height="9"/><rect x="180" y="490" width="16" height="9" class="lite"/>
          <rect x="223" y="439" width="112" height="9"/><rect x="223" y="490" width="82" height="9"/><rect x="305" y="490" width="30" height="9" class="lite"/>
          <rect x="223" y="542" width="74" height="9"/><rect x="297" y="542" width="38" height="9" class="lite"/>
          <rect x="379" y="465" width="73" height="9"/><rect x="379" y="516" width="38" height="9"/><rect x="417" y="516" width="35" height="9" class="lite"/>
        </g>
        <g class="bs">
          <text x="223" y="369">Estado</text><text x="378" y="369">Gênero</text><text x="223" y="388">Goiás</text>
          <text x="72" y="510" class="b">Gasto Salarial Total</text><text x="72" y="522">R$ 453.765,00</text>
          <text x="228" y="460">São Paulo</text><text x="228" y="471">R$ 121.500,00</text>
          <text x="228" y="510" class="b">Goiás</text><text x="228" y="522">R$ 61.605,00</text>
          <text x="228" y="561">Mato Grosso</text><text x="228" y="573">R$ 53.480,00</text>
          <text x="382" y="485">M</text><text x="382" y="497">R$ 48.205,00</text>
          <text x="382" y="536">H</text><text x="382" y="548">R$ 13.400,00</text>
        </g>
        <path d="M271 594l6 5 6-5" class="chevg"/>

        <g clip-path="url(#mapclip)">
          <rect x="480" y="348" width="245" height="272" fill="#0d1f33"/>
          <path d="M480 348H725V372L716 408 707 470 672 492 640 503 618 532 602 560 575 590 560 620H480z" fill="#3f4d30" filter="url(#sat)"/>
          <path d="M505 620L560 540 600 510M540 450L600 470 640 503" class="river"/>
        </g>
        <g class="blue">
          <circle cx="539" cy="419" r="8"/><circle cx="607" cy="432" r="5"/><circle cx="632" cy="501" r="9"/><circle cx="665" cy="494" r="4"/><circle cx="613" cy="546" r="3"/>
        </g>
        <g class="maptx">
          <text x="600" y="416">Brasília</text><text x="495" y="507">PARAGUAI</text><text x="574" y="485">SÃO PAULO</text><text x="565" y="545">SANTA CATARINA</text><text x="640" y="465">MINAS GERAIS</text>
          <text x="486" y="606" class="tiny">Google</text><text x="520" y="606" class="tiny">2024 Microsoft Corporation · Condições</text>
        </g>

        <g class="donut wide" transform="rotate(-90 928 483)">
          <circle cx="928" cy="483" r="77" pathLength="100" stroke="#5c0f78" stroke-dasharray="53 100"/>
          <circle cx="928" cy="483" r="77" pathLength="100" stroke="#a5d0fb" stroke-dasharray="47 100" stroke-dashoffset="-53"/>
        </g>
        <g class="bs">
          <text x="805" y="398">M</text><text x="790" y="413">14 (46,67%)</text>
          <text x="1007" y="568">H</text><text x="1007" y="581">16 (53,33%)</text>
        </g>
        <path d="M830 410L845 417M988 565L1000 572" class="conn"/>
      </svg>
    </figure>

    <!-- Metas e resultados -->
    <figure class="card card-night">
      <svg class="dash d6" viewBox="24 27 1102 618" role="img" aria-label="Dashboard metas e resultados">
        <rect x="86" y="40" width="79" height="37" rx="18.5" class="n-green"/>
        <circle cx="103" cy="58" r="15" fill="#04140b"/>
        <text x="124" y="65" class="off">Off</text>
        <text x="575" y="70" class="nt mid">DASHBOARD METAS E RESULTADOS</text>
        <use href="#hexlogo" x="1034" y="44" width="32" height="34" class="nlogo"/>

        <g class="nbox">
          <rect x="37" y="91" width="182" height="88" rx="8"/><rect x="232" y="91" width="176" height="88" rx="8"/>
          <rect x="37" y="188" width="371" height="159" rx="8"/><rect x="37" y="358" width="371" height="79" rx="8"/><rect x="37" y="448" width="371" height="182" rx="8"/>
          <rect x="420" y="91" width="694" height="256" rx="8"/><rect x="420" y="358" width="694" height="272" rx="8"/>
        </g>
        <g class="mid">
          <text x="126" y="107" class="nl">Faturamento Total</text><text x="320" y="107" class="nl">Lucro Total</text>
          <text x="126" y="157" class="nv">R$ 2,32 Mi</text><text x="320" y="157" class="nv">R$ 1,33 Mi</text>
        </g>
        <text x="44" y="206" class="nl">Indicador de Meta de Faturamento</text>
        <path d="M136 327A87 87 0 0 1 309 312" class="gauge"/>
        <path d="M309 312A87 87 0 0 1 310 327" class="gauge2"/>
        <path d="M287 290L312 280" class="needle"/>
        <text x="222" y="314" class="ng mid">R$ 2,32 Mi</text>
        <g class="ns">
          <text x="48" y="327">R$ 0,00 Mi</text><text x="333" y="327">R$ 2,45 Mi</text><text x="318" y="272">2 Mi</text>
        </g>
        <text x="44" y="374" class="nl">Indicador de Meta por Semestre</text>
        <polygon points="44,382 400,430 44,430" fill="#0d3d1e"/>
        <text x="218" y="407" class="nv2 mid">R$ 1,14 Mi</text>
        <path d="M286 402l4 4 8-8" class="ncheck"/>
        <text x="223" y="424" class="nw mid">Meta: 1020000 (+11,56%)</text>

        <rect x="45" y="457" width="356" height="165" fill="#0a0f0c"/>
        <rect x="171" y="485" width="229" height="21" fill="#fff"/>
        <rect x="171" y="506" width="229" height="22" fill="#6bd77f"/><rect x="171" y="528" width="229" height="22" fill="#7ddc8e"/>
        <rect x="171" y="550" width="229" height="21" fill="#82de92"/><rect x="171" y="571" width="229" height="21" fill="#8ee09c"/>
        <rect x="171" y="594" width="229" height="22" fill="#fff"/>
        <path d="M45 484H400M45 505H170M45 592H170" class="nln"/>
        <g class="nth">
          <text x="48" y="470">EQUIPE</text><text x="203" y="471" class="mid">Custo Total</text><text x="289" y="471" class="mid">Faturamento Total</text><text x="372" y="471" class="mid">Lucro Total</text>
          <text x="65" y="499" class="b">Bronze</text><text x="74" y="521">Maria Silva</text><text x="74" y="543">José Leonardo</text><text x="74" y="565">Glaus Domingues</text><text x="74" y="586">Pedro Roberto</text>
          <text x="65" y="611" class="b">Total</text>
        </g>
        <g class="ntd end">
          <text x="236" y="499" class="b">591.620,50</text><text x="340" y="499" class="b">R$ 909.393,00</text><text x="397" y="499" class="b">R$ 517</text>
          <text x="236" y="521">103.089,70</text><text x="337" y="521">R$ 229.081,50</text><text x="397" y="521">R$ 121</text>
          <text x="236" y="543">91.061,80</text><text x="337" y="543">R$ 225.028,90</text><text x="397" y="543">R$ 123</text>
          <text x="236" y="565">95.747,80</text><text x="337" y="565">R$ 228.272,70</text><text x="397" y="565">R$ 133</text>
          <text x="236" y="586">95.450,20</text><text x="337" y="586">R$ 225.411,90</text><text x="397" y="586">R$ 125</text>
          <text x="236" y="611" class="b">984.251,80</text><text x="340" y="611" class="b">R$ 2.317.846,00</text><text x="397" y="611" class="b">R$ 1.333</text>
        </g>
        <rect x="394" y="458" width="6" height="30" fill="#bbb"/>
        <rect x="45" y="616" width="352" height="6" fill="#ccc"/>

        <text x="428" y="107" class="nl">Análise de Produtos</text>
        <text x="428" y="132" class="nxb">PRODUTO</text>
        <g class="nleg">
          <circle cx="494" cy="128" r="3" fill="#2a88e0"/><text x="500" y="132">Água co...</text>
          <circle cx="566" cy="128" r="3" fill="#1f3fae"/><text x="572" y="132">Água e...</text>
          <circle cx="624" cy="128" r="3" fill="#e0702a"/><text x="630" y="132">Amstel</text>
          <circle cx="676" cy="128" r="3" fill="#8a1fa0"/><text x="682" y="132">Brahma</text>
          <circle cx="731" cy="128" r="3" fill="#d93fa0"/><text x="737" y="132">Budweiser</text>
          <circle cx="797" cy="128" r="3" fill="#6a3fc0"/><text x="803" y="132">Coca-C...</text>
          <circle cx="858" cy="128" r="3" fill="#d0a020"/><text x="864" y="132">Guaraná ...</text>
          <circle cx="929" cy="128" r="3" fill="#d03a5a"/><text x="935" y="132">Heineken</text>
          <circle cx="992" cy="128" r="3" fill="#1a7a7a"/><text x="998" y="132">Pepsi</text>
          <circle cx="1035" cy="128" r="3" fill="#28b045"/><text x="1041" y="132">Soda</text>
        </g>
        <path d="M1092 121l9 7-9 7z" fill="#ddd"/>
        <path d="M718 148V310M483 234H1110" class="ndot"/>
        <g class="ns">
          <text x="447" y="151">34 Mil</text><text x="447" y="199">32 Mil</text><text x="447" y="244">30 Mil</text><text x="447" y="291">28 Mil</text>
        </g>
        <text x="441" y="283" class="nxb" transform="rotate(-90 441 283)">Total Itens Vendidos</text>
        <g class="ns mid">
          <text x="585" y="323">R$ 100 Mil</text><text x="708" y="323">R$ 150 Mil</text><text x="833" y="323">R$ 200 Mil</text><text x="958" y="323">R$ 250 Mil</text><text x="1083" y="323">R$ 300 Mil</text>
          <text x="783" y="339">Faturamento Total</text>
        </g>
        <circle cx="506" cy="171" r="6" fill="#1f3fae"/><circle cx="647" cy="168" r="7" fill="#d93fa0"/><circle cx="571" cy="196" r="8" fill="#2a88e0"/><circle cx="695" cy="189" r="8" fill="#2a88e0"/>
        <circle cx="1003" cy="195" r="10" fill="#c04fc0"/><circle cx="1056" cy="190" r="12" fill="#6a3fc0"/><circle cx="518" cy="246" r="5" fill="#8a1fa0"/><circle cx="913" cy="236" r="9" fill="#28b045"/>
        <circle cx="708" cy="251" r="7" fill="#e060b0"/><circle cx="582" cy="275" r="6" fill="#e0702a"/><circle cx="599" cy="267" r="7" fill="#e8903a"/><circle cx="628" cy="267" r="7" fill="#d03a5a"/>
        <circle cx="623" cy="277" r="6" fill="#25b5e0"/><circle cx="796" cy="283" r="10" fill="#d0a020"/><circle cx="938" cy="288" r="11" fill="#1a7a7a"/>

        <text x="428" y="375" class="nl">Faturamento Total por Marca e Produto</text>
        <g class="n-green">
          <rect x="459" y="410" width="62" height="192"/><rect x="538" y="551" width="62" height="51"/><rect x="617" y="555" width="62" height="47"/><rect x="696" y="445" width="62" height="157"/>
          <rect x="775" y="533" width="62" height="69"/><rect x="854" y="519" width="62" height="83"/><rect x="933" y="527" width="62" height="75"/><rect x="1012" y="558" width="62" height="44"/>
        </g>
        <g class="ns mid">
          <text x="490" y="403">R$ 0,82 Mi</text><text x="569" y="544">R$ 0,18 Mi</text><text x="648" y="548">R$ 0,13 Mi</text><text x="727" y="438">R$ 0,51 Mi</text>
          <text x="806" y="526">R$ 0,22 Mi</text><text x="885" y="512">R$ 0,27 Mi</text><text x="964" y="520">R$ 0,29 Mi</text><text x="1043" y="551">R$ 0,14 Mi</text>
          <text x="490" y="616">Ambev</text><text x="569" y="616">Botafort</text><text x="648" y="616">Del Valle</text><text x="727" y="616">Grupo Kaiser</text>
          <text x="806" y="616">Maguary</text><text x="885" y="616">Natural One</text><text x="964" y="616">Pepsico</text><text x="1043" y="616">Schinch</text>
        </g>
      </svg>
    </figure>
  </section>

  <ul class="features">
    <li class="feature"><svg class="tick" aria-hidden="true"><use href="#check"/></svg><span>PLANILHA PARA FLUXO DE CAIXA</span></li>
    <li class="feature"><svg class="tick" aria-hidden="true"><use href="#check"/></svg><span>CURVA ABC</span></li>
    <li class="feature"><svg class="tick" aria-hidden="true"><use href="#check"/></svg><span>CURVA S</span></li>
    <li class="feature"><svg class="tick" aria-hidden="true"><use href="#check"/></svg><span>GRÁFICO DE GANTT</span></li>
    <li class="feature"><svg class="tick" aria-hidden="true"><use href="#check"/></svg><span>PLANILHA ORÇAMENTÁRIA</span></li>
    <li class="feature"><svg class="tick" aria-hidden="true"><use href="#check"/></svg><span>PLANILHA PARA CONTROLE FINANCEIRO</span></li>
    <li class="feature"><svg class="tick" aria-hidden="true"><use href="#check"/></svg><span>DASHBOARD COMERCIAL</span></li>
    <li class="feature"><svg class="tick" aria-hidden="true"><use href="#check"/></svg><span>DASHBOARD DE VENDAS E DEVOLUÇÕES</span></li>
    <li class="feature"><svg class="tick" aria-hidden="true"><use href="#check"/></svg><span>DASHBOARD DE RH/FUNCIONÁRIOS</span></li>
    <li class="feature"><svg class="tick" aria-hidden="true"><use href="#check"/></svg><span>DASHBOARD DE METAS E RESULTADOS</span></li>
    <li class="feature"><svg class="tick" aria-hidden="true"><use href="#check"/></svg><span>DASHBOARD PARA ANÁLISE DE PRODUTOS</span></li>
    <li class="feature"><svg class="tick" aria-hidden="true"><use href="#check"/></svg><span>E MUITO MAIS...</span></li>
  </ul>
</main>
</body>
</html>
```
FILE: styles.css
```css
* { box-sizing: border-box; }
html, body { margin: 0; padding: 0; background: #fff; }
body { font-family: Inter, "Liberation Sans", sans-serif; color: #1e2535; }
.defs { position: absolute; }
.page { padding: 39px 0 33px 141px; }

.gallery { display: grid; grid-template-columns: repeat(3, 367px); grid-template-rows: 206px 205px; gap: 114px 29px; }
.card { margin: 0; border-radius: 8px; overflow: hidden; box-shadow: 0 3px 12px rgba(0, 0, 0, .17); }
.card-white { background: #fff; }
.card-brown { background: #7b3a17; }
.card-green { background: #20592f; }
.card-red { background: #9c2f40; }
.card-black { background: #1a1a1a; }
.card-night { background: #04140b; }
.dash { display: block; width: 367px; height: 206px; filter: blur(.55px); font-family: Roboto, "Liberation Sans", sans-serif; }
.mid, .mid text { text-anchor: middle; }
.end, .end text { text-anchor: end; }
.b, .b text { font-weight: 700; }
.donut circle { fill: none; stroke-width: 36; }
.donut.pie circle { stroke-width: 81; }
.donut.thin circle { stroke-width: 20; }
.donut.wide circle { stroke-width: 38; }
.ic { color: #9a9a9a; }

/* comercial */
.c1title { font-size: 20px; font-weight: 700; fill: #1d2f73; }
.slic .ul { stroke: #cfeef0; stroke-width: 2; fill: none; }
.slic rect { fill: #0b2260; stroke: #bfe6ec; stroke-width: 1; }
.slic .sb { fill: #d8d8d8; stroke: none; }
.slic text { font-size: 11px; fill: #c8d4ee; }
.slic .hd { font-size: 12px; font-weight: 700; fill: #222; }
.ttl { font-size: 12px; fill: #666; }
.grid { stroke: #efefef; stroke-width: 1; fill: none; }
.ax text { font-size: 10px; fill: #666; }
.navy rect { fill: #0b2260; }
.legend text { font-size: 10px; fill: #666; }
.curve { fill: none; stroke: #1f3a80; stroke-width: 3; }

/* marrom */
.logo { color: #c9a394; }
.brand { font-size: 18px; font-weight: 700; letter-spacing: 1.5px; fill: #fbeee8; }
.brandline { stroke: #c9a394; stroke-width: 2; stroke-dasharray: 3 1; }
.lbl { font-size: 14px; fill: #f2cdb6; }
.lbl2 { font-size: 15px; fill: #f7dccb; }
.card-brown .ic { color: #e0b79c; }
.peach rect { fill: #f6c6a6; }
.peach text { font-size: 15px; fill: #6f3d22; }
.tbl text { font-size: 14px; fill: #666; }
.tbl .b text { fill: #1c1c1c; }
.tbg { fill: #fff; }
.thd { fill: #d9e3f3; }
.tln { stroke: #c3d2ea; stroke-width: 2; fill: none; }
.kpi rect { fill: none; stroke: #f2bd96; stroke-width: 2.5; }
.kpi text { font-size: 15.5px; fill: #eec6a9; }
.kpi .v { font-size: 25px; fill: #f9dfcf; }
.plab text { font-size: 15px; font-weight: 700; fill: #fbe8dc; }

/* verde */
.gt { font-size: 20px; font-weight: 700; fill: #e8efe9; letter-spacing: .3px; font-family: "Liberation Sans", sans-serif; }
.gl { font-size: 12px; fill: #cfe3d3; }
.card-green .ic { color: #a8c8ae; }
.gb rect { fill: #3aa655; }
.gb text { font-size: 12px; fill: #d8f0dd; }
.wh { fill: #e8ece8; }
.thumb { fill: #20592f; }
.gbox rect { fill: none; stroke: #a8c8ae; stroke-width: 1.6; }
.gv text { fill: #eef4ef; font-family: "Liberation Sans", sans-serif; }
.gv .s13 { font-size: 14px; }
.gv .s36 { font-size: 37px; }
.pieln { stroke: #dff3e3; stroke-width: 1; fill: none; }
.piering { fill: none; stroke: #dff3e3; stroke-width: 1; }
.pl text { font-size: 10.5px; fill: #e8f6ea; }
.gax { stroke: #8fb79a; stroke-width: 1.4; fill: none; }
.gc rect { fill: #3aa655; stroke: #6cc182; stroke-width: 1; }
.ga text { font-size: 10.5px; font-weight: 700; fill: #dfeee2; }

/* vermelho */
.rp rect { fill: #fff; }
.chev { fill: none; stroke: #aaa; stroke-width: 1.4; }
.cb rect { fill: #fff; stroke: #777; stroke-width: 1.2; }
.rt text { font-size: 13.5px; fill: #555; }
.erase { fill: none; stroke: #999; stroke-width: 2.4; }
.rl { font-size: 14.5px; fill: #555; }
.rv { font-size: 35px; fill: #444; letter-spacing: .8px; }
.rh { font-size: 13.5px; fill: #444; letter-spacing: .5px; }
.tm text { font-size: 12px; fill: #f7e4e6; }
.rline { fill: none; stroke: #a63a4b; stroke-width: 2.4; }
.rdot circle { fill: #9c2f40; }
.rs text { font-size: 10px; fill: #777; }
.rs .wtxt { fill: #f7dfe2; }
.rbar rect { fill: #9c2f40; }

/* preto */
.bt { font-size: 27px; fill: #eee; letter-spacing: -.4px; }
.idln { fill: none; stroke: #3f7aa0; stroke-width: 2.4; }
.bp rect { fill: #fff; filter: drop-shadow(0 0 2.5px #8a8a8a); }
.glow { fill: none; stroke: #777; stroke-width: 8; filter: blur(5px); }
.bv { font-size: 25px; fill: #444; font-weight: 500; }
.bl { font-size: 13px; fill: #888; }
.bk { fill: #1a1a1a; }
.btw text { font-size: 11.5px; fill: #c8c8c8; }
.btw .b { fill: #eee; }
.btd text { font-size: 11px; fill: #3c6a9b; }
.btd .b text { fill: #222; }
.bh text { font-size: 13.5px; fill: #444; letter-spacing: .5px; }
.bun { stroke: #3f9cf5; stroke-width: 2; fill: none; }
.conn { fill: none; stroke: #dce8f5; stroke-width: 1.5; }
.tree rect { fill: #2f8fee; }
.tree .lite { fill: #e3e3e3; }
.bs text { font-size: 10.5px; fill: #666; }
.bs .b { fill: #222; }
.chevg { fill: none; stroke: #888; stroke-width: 1.4; }
.river { fill: none; stroke: #c9c6a8; stroke-width: 1; opacity: .5; }
.blue circle { fill: #3b88dd; }
.maptx text { font-size: 10px; fill: #e4e4d8; }
.maptx .tiny { font-size: 8px; }

/* noite */
.n-green, .n-green rect { fill: #28b045; }
.off { font-size: 16px; fill: #0b3a1c; font-weight: 500; }
.nt { font-size: 27.5px; font-weight: 700; fill: #f2f4f2; font-family: "Open Sans", sans-serif; }
.nlogo { color: #2a3a30; }
.nbox rect { fill: none; stroke: #2c4a38; stroke-width: 2; }
.nl { font-size: 13.5px; fill: #c8d2cb; letter-spacing: .3px; }
.nv { font-size: 31px; fill: #28b045; }
.nv2 { font-size: 30px; fill: #28b045; }
.ng { font-size: 24px; fill: #d8dcd8; }
.ns text { font-size: 10.5px; fill: #b8c0ba; }
.gauge { fill: none; stroke: #28b045; stroke-width: 36; }
.gauge2 { fill: none; stroke: #fff; stroke-width: 36; }
.needle { stroke: #2f6fb5; stroke-width: 2; fill: none; }
.ncheck { fill: none; stroke: #28b045; stroke-width: 1.6; }
.nw { font-size: 13.5px; fill: #e8ece8; }
.nln { stroke: #3a4a40; stroke-width: 1.4; fill: none; }
.nth text { font-size: 11.5px; fill: #c0c8c2; }
.ntd text { font-size: 10.5px; fill: #2c7a3c; }
.ntd .b { fill: #222; }
.nxb { font-size: 10.5px; font-weight: 700; fill: #c8d2cb; }
.nleg text { font-size: 10.5px; fill: #c0c8c2; }
.ndot { fill: none; stroke: #d0d0d0; stroke-width: 2; stroke-dasharray: 2 4; }

/* lista */
.features { list-style: none; margin: 58px 0 0; padding: 0; display: grid; grid-template-columns: repeat(3, 396px); grid-auto-rows: 60px; }
.feature { display: flex; align-items: center; gap: 8px; padding-left: 19px; font-size: 16.5px; line-height: 16px; letter-spacing: .28px; font-weight: 380; }
.feature span { width: 285px; }
.tick { flex: none; width: 24px; height: 24px; }
```
